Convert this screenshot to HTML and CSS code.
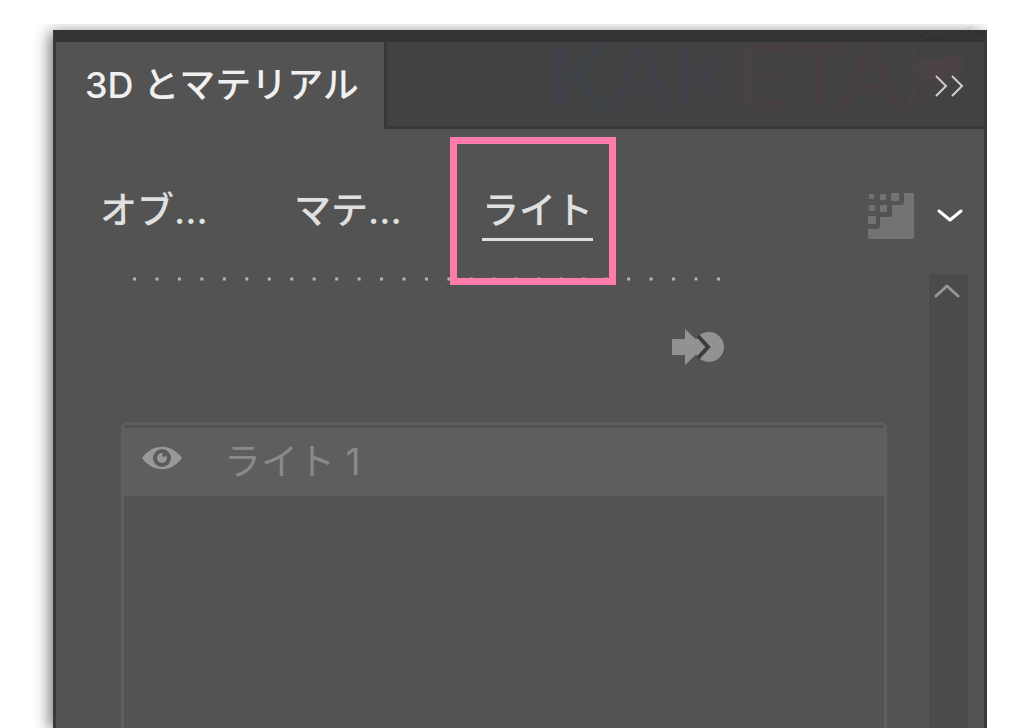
FILE: index.html
```html
<!DOCTYPE html>
<html lang="ja">
<head>
    <meta charset="UTF-8">
    <meta name="viewport" content="width=device-width, initial-scale=1.0">
    <title>3D とマテリアル</title>
    <link rel="stylesheet" href="styles.css">
</head>
<body>
    <main class="panel">
        <header class="panel-header">
            <button class="panel-tab" type="button">3D とマテリアル</button>
            <div class="header-fill">
                <button class="icon-button" type="button" aria-label="パネルを閉じる">
                    <svg width="32" height="24" viewBox="0 0 32 24" fill="none" stroke="#d0d0d0" stroke-width="2">
                        <path d="M2 2l10 10L2 22M18 2l10 10-10 10"/>
                    </svg>
                </button>
            </div>
            <div class="watermark" aria-hidden="true">
                <span class="watermark-text">KAKETA</span>
                <svg class="watermark-logo" width="80" height="90" viewBox="0 0 80 90" fill="none" stroke="#a04a5c" stroke-width="2">
                    <circle cx="34" cy="34" r="26"/>
                    <path d="M12 35c8-6 14 3 24 0s15-6 22-2c0 10-8 20-22 23C20 56 12 46 12 35z" fill="#a04a5c" stroke="none"/>
                    <path d="M12 54L4 82l24-10 10-11M4 82l12-24M16 64l10 8M60 8L68 0M66 20l14-8M68 34h12"/>
                </svg>
            </div>
        </header>

        <nav class="tabs">
            <button class="tab" type="button">オブ...</button>
            <button class="tab" type="button">マテ...</button>
            <div class="tab-wrap">
                <button class="tab active" type="button">ライト</button>
                <div class="highlight"></div>
            </div>
            <div class="tools">
                <button class="icon-button" type="button" aria-label="レンダリング">
                    <svg width="46" height="46" viewBox="0 0 46 46" fill="#737373">
                        <path d="M36 0h9a1 1 0 0 1 1 1v43a2 2 0 0 1-2 2H2a2 2 0 0 1-2-2v-8h9a3 3 0 0 0 3-3V24h9a3 3 0 0 0 3-3v-9h9a3 3 0 0 0 3-3z"/>
                        <rect x="1" y="1" width="5" height="5" rx="1"/>
                        <rect x="12" y="1" width="6" height="6" rx="1"/>
                        <rect x="23" y="0" width="8" height="8" rx="1"/>
                        <rect x="1" y="12" width="6" height="6" rx="1"/>
                        <rect x="12" y="12" width="7" height="7" rx="1"/>
                        <rect x="0" y="23" width="8" height="8" rx="1"/>
                    </svg>
                </button>
                <button class="icon-button" type="button" aria-label="メニュー">
                    <svg width="26" height="16" viewBox="0 0 26 16" fill="none" stroke="#fff" stroke-width="3" stroke-linecap="round" stroke-linejoin="round">
                        <path d="M2 3l11 9 11-9"/>
                    </svg>
                </button>
            </div>
        </nav>

        <div class="panel-body">
            <section class="content">
                <svg class="dots" width="590" height="10" viewBox="0 0 590 10">
                    <path d="M0 5h590" stroke="#b4b4b4" stroke-width="3" stroke-dasharray="3 19.46"/>
                </svg>
                <button class="icon-button place" type="button" aria-label="ライトを背面に移動">
                    <svg width="54" height="38" viewBox="0 0 54 38">
                        <circle cx="38" cy="19" r="15" fill="#929292"/>
                        <path d="M27 8l10 11-10 11" fill="none" stroke="#3c3c3c" stroke-width="4"/>
                        <path d="M1 11h13V1l19 18-19 18V27H1z" fill="#929292"/>
                    </svg>
                </button>
                <ul class="light-list">
                    <li class="light-row">
                        <button class="icon-button" type="button" aria-label="表示">
                            <svg width="40" height="24" viewBox="0 0 40 24">
                                <path d="M0 12C11-3 29-3 40 12 29 27 11 27 0 12z" fill="#989898"/>
                                <circle cx="20" cy="12" r="9" fill="#5b5b5b"/>
                                <circle cx="20" cy="12" r="5" fill="#989898"/>
                                <circle cx="22" cy="9" r="2" fill="#5b5b5b"/>
                            </svg>
                        </button>
                        <span class="light-name">ライト 1</span>
                    </li>
                </ul>
            </section>
            <div class="scrollbar">
                <button class="icon-button" type="button" aria-label="上へスクロール">
                    <svg width="26" height="16" viewBox="0 0 26 16" fill="none" stroke="#959595" stroke-width="3" stroke-linecap="round" stroke-linejoin="round">
                        <path d="M2 13l11-10 11 10"/>
                    </svg>
                </button>
            </div>
        </div>
    </main>
</body>
</html>
```

FILE: styles.css
```css
* {
    margin: 0;
    padding: 0;
    box-sizing: border-box;
}

body {
    background-color: #fff;
    color: #e0e0e0;
    font-family: Inter, "Noto Sans CJK JP", sans-serif;
    padding: 30px 37px 0 53px;
}

button {
    background: none;
    border: none;
    color: inherit;
    font: inherit;
    cursor: pointer;
}

svg {
    display: block;
}

/* Panel */
.panel {
    display: flex;
    flex-direction: column;
    min-height: calc(100vh - 30px);
    background-color: #535353;
    border: 3px solid #393939;
    border-top: 12px solid #333;
    border-bottom: none;
    box-shadow: -4px 2px 14px rgba(0, 0, 0, 0.5);
    clip-path: inset(-6px 0 0 -20px);
}

.panel-header {
    position: relative;
    display: flex;
    height: 87px;
}

.panel-tab {
    width: 328px;
    padding: 0 0 2px 29px;
    font-size: 36px;
    font-weight: 500;
    line-height: 40px;
    text-align: left;
    white-space: nowrap;
    color: #f0f0f0;
}

.header-fill {
    flex: 1;
    display: flex;
    align-items: center;
    justify-content: flex-end;
    padding: 4px 18px 0 0;
    background-color: #424242;
    border-left: 3px solid #383838;
    border-bottom: 3px solid #383838;
}

.icon-button {
    flex: none;
}

/* Watermark */
.watermark {
    position: absolute;
    right: 0;
    bottom: 14px;
    display: flex;
    align-items: flex-end;
    gap: 2px;
    opacity: 0.1;
    pointer-events: none;
}

.watermark-text {
    font-family: Lato, sans-serif;
    font-size: 92px;
    font-weight: 700;
    line-height: 80px;
    background: linear-gradient(90deg, #2c5080, #484880 45%, #80404c 60%);
    background-clip: text;
    color: transparent;
}

/* Tabs */
.tabs {
    display: flex;
    align-items: flex-start;
    height: 145px;
    padding: 56px 21px 0 44px;
}

.tab {
    width: 194px;
    font-size: 37px;
    font-weight: 500;
    line-height: 52px;
    text-align: left;
    white-space: nowrap;
}

.tab-wrap {
    position: relative;
    margin-left: -6px;
}

.tab.active {
    width: auto;
    padding-bottom: 1px;
    border-bottom: 3px solid #e0e0e0;
}

.highlight {
    position: absolute;
    inset: -48px -23px -44px -32px;
    border: 7px solid #ff7bac;
    pointer-events: none;
}

.tools {
    display: flex;
    align-items: center;
    gap: 23px;
    margin-left: auto;
    padding-top: 8px;
}

/* Body */
.panel-body {
    flex: 1;
    display: flex;
    padding-right: 16px;
}

.content {
    flex: 1;
    display: flex;
    flex-direction: column;
    padding: 0 42px 0 65px;
}

.dots {
    margin-left: 12px;
}

.place {
    align-self: flex-end;
    margin: 44px 162px 0 0;
}

.light-list {
    flex: 1;
    margin-top: 56px;
    list-style: none;
    border: 3px solid #5f5f5f;
    border-bottom: none;
    border-radius: 6px 6px 0 0;
}

.light-row {
    display: flex;
    align-items: center;
    gap: 42px;
    height: 71px;
    padding: 0 18px 8px;
    background-color: #5e5e5e;
    border-top: 3px solid #505050;
}

.light-name {
    padding-top: 8px;
    font-size: 37px;
    line-height: 48px;
    color: #898989;
}

.scrollbar {
    width: 39px;
    padding: 9px 5px;
    background-color: #4b4b4b;
}
```
